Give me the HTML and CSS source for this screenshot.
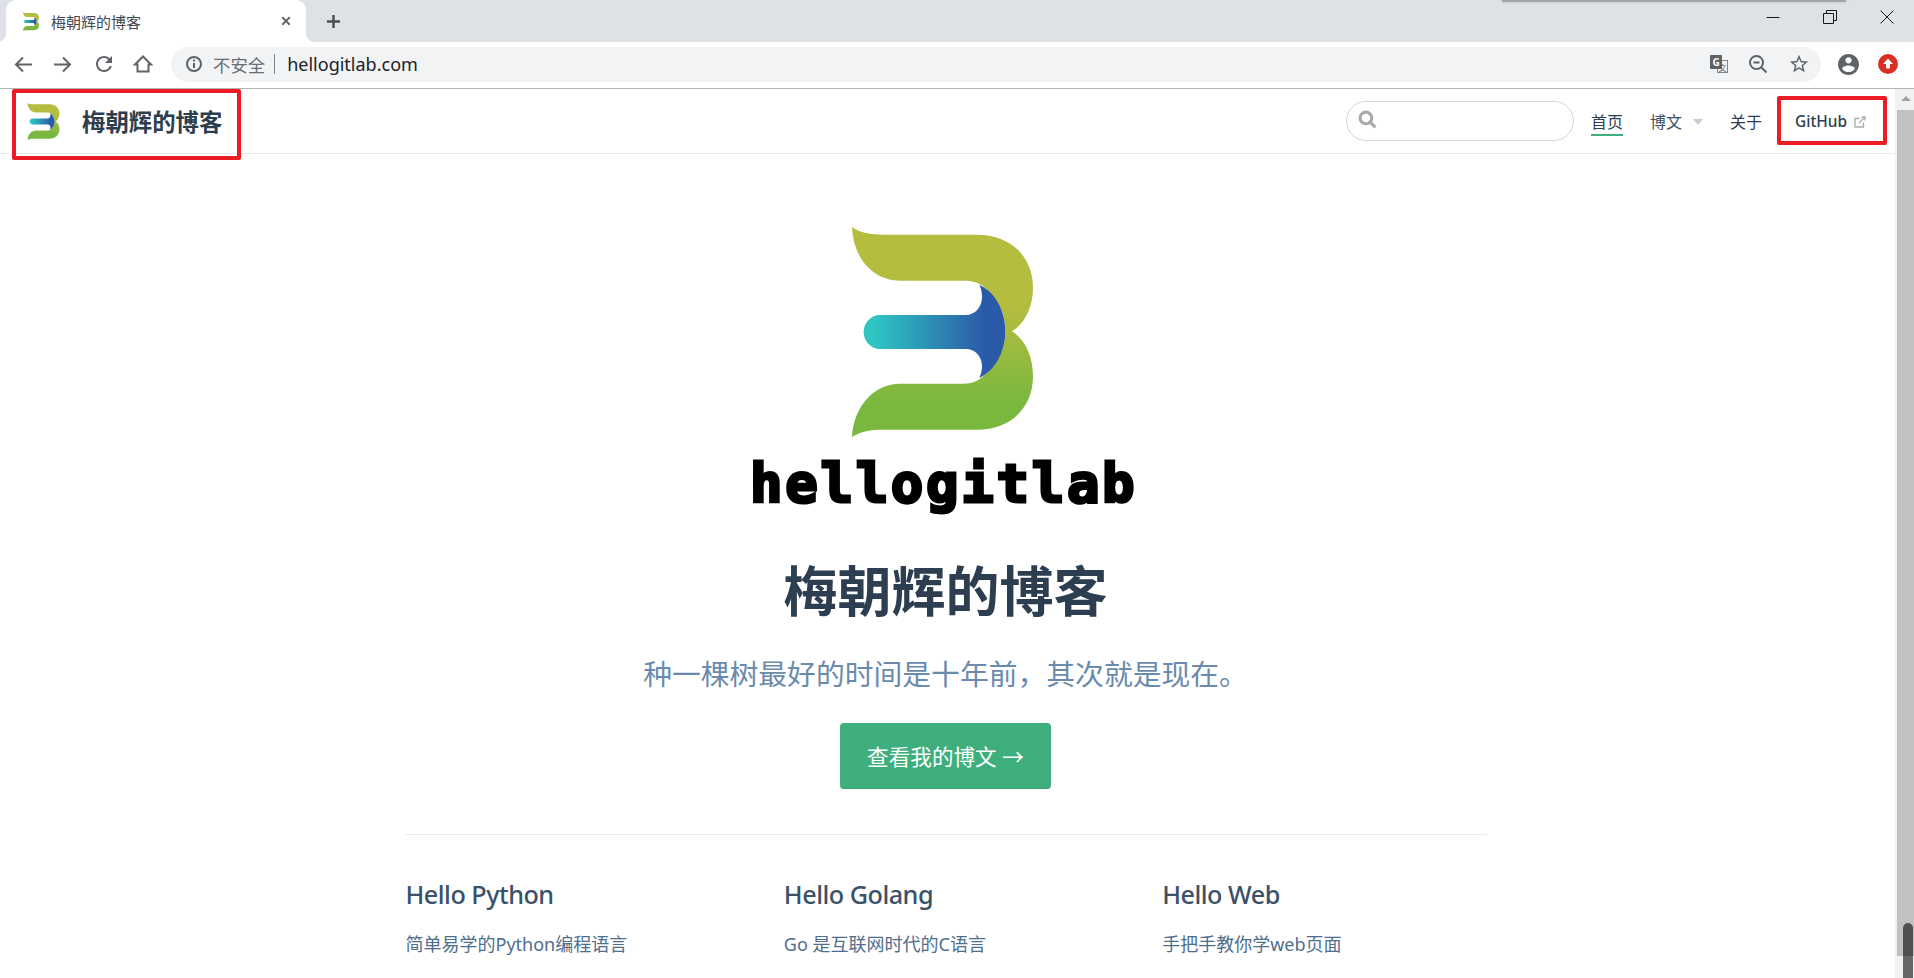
FILE: index.html
```html
<!DOCTYPE html>
<html lang="zh-CN">
<head>
<meta charset="utf-8">
<title>梅朝辉的博客</title>
<link rel="stylesheet" href="styles.css">
</head>
<body>
<svg class="sprite" aria-hidden="true">
  <defs>
    <linearGradient id="gGreen" gradientUnits="userSpaceOnUse" x1="0" y1="52" x2="0" y2="682">
      <stop offset="0.38" stop-color="#b5bd3f"/>
      <stop offset="0.85" stop-color="#78b83f"/>
    </linearGradient>
    <linearGradient id="gBlue" gradientUnits="userSpaceOnUse" x1="430" y1="0" x2="855" y2="0">
      <stop offset="0.08" stop-color="#2fc4c2"/>
      <stop offset="0.85" stop-color="#2b5ba8"/>
    </linearGradient>
    <symbol id="mark" viewBox="395 52 543 630">
      <path fill="url(#gGreen)" d="M395 52C420 70 450 75 490 75L770 75C870 75 938 140 938 235C938 290 915 340 875 365C915 390 938 440 938 500C938 595 870 660 770 660L490 660C450 660 420 665 395 682C400 590 460 522 540 522L730 522C755 522 770 515 785 503C835 465 855 415 855 365C855 315 835 265 785 227C770 218 755 213 730 213L540 213C460 213 400 150 395 52Z"/>
      <path fill="url(#gBlue)" d="M480 316L735 316C765 316 785 292 785 262C785 248 782 236 777 225C830 250 855 310 855 365C855 420 830 480 777 505C782 494 785 482 785 470C785 440 765 418 735 418L480 418C452 418 430 395 430 367C430 339 452 316 480 316Z"/>
    </symbol>
  </defs>
</svg>

<header class="chrome">
  <div class="tabstrip">
    <div class="tab">
      <svg class="favicon"><use href="#mark"/></svg>
      <span class="tab-title">梅朝辉的博客</span>
      <svg class="tab-close" viewBox="0 0 12 12"><path d="M1.5 1.5l9 9M10.5 1.5l-9 9"/></svg>
    </div>
    <svg class="new-tab" viewBox="0 0 16 16"><path d="M8 1v14M1 8h14"/></svg>
    <div class="spacer"></div>
    <div class="win-controls">
      <svg class="win-btn" viewBox="0 0 14 14"><path d="M0.5 7.5h13"/></svg>
      <svg class="win-btn" viewBox="0 0 14 14"><path d="M0.5 3.5h10v10h-10zM3.5 3.5v-3h10v10h-3"/></svg>
      <svg class="win-btn" viewBox="0 0 14 14"><path d="M0.5 0.5l13 13M13.5 0.5l-13 13"/></svg>
    </div>
    <div class="window-shadow"></div>
  </div>
  <div class="toolbar">
    <svg class="tool-icon" viewBox="0 0 20 20"><path d="M19 10.5H3M10 3.5L3 10.5l7 7"/></svg>
    <svg class="tool-icon" viewBox="0 0 20 20"><path d="M1 10.5h16M10 3.5l7 7-7 7"/></svg>
    <svg class="tool-icon fill" viewBox="0 0 24 24"><path d="M17.65 6.35A7.958 7.958 0 0 0 12 4c-4.42 0-7.99 3.58-7.99 8s3.57 8 7.99 8c3.73 0 6.84-2.55 7.73-6h-2.08A5.99 5.99 0 0 1 12 18c-3.31 0-6-2.69-6-6s2.69-6 6-6c1.66 0 3.14.69 4.22 1.78L13 11h7V4l-2.35 2.35z"/></svg>
    <svg class="tool-icon" viewBox="0 0 20 20"><path d="M10 2.5L2 10.5h2.5v7h11v-7H18Z"/></svg>
    <div class="omnibox">
      <svg class="omni-info" viewBox="0 0 18 18"><circle cx="9" cy="9" r="7"/><path d="M9 8v5M9 4.5v2"/></svg>
      <span class="omni-warn">不安全</span>
      <span class="omni-sep"></span>
      <span class="omni-url">hellogitlab.com</span>
      <div class="spacer"></div>
      <span class="translate"><span class="tr-back">文</span><span class="tr-front">G</span></span>
      <svg class="omni-zoom" viewBox="0 0 20 20"><circle cx="8.5" cy="8.5" r="6.5"/><path d="M13.5 13.5l5 5M5.5 8.5h6"/></svg>
      <svg class="omni-star" viewBox="0 0 24 24"><path d="M22 9.24l-7.19-.62L12 2 9.19 8.63 2 9.24l5.46 4.73L5.82 21 12 17.27 18.18 21l-1.63-7.03L22 9.24zM12 15.4l-3.76 2.27 1-4.28-3.32-2.88 4.38-.38L12 6.1l1.71 4.04 4.38.38-3.32 2.88 1 4.28L12 15.4z"/></svg>
    </div>
    <svg class="avatar" viewBox="2 2 20 20"><path d="M12 2C6.48 2 2 6.48 2 12s4.48 10 10 10 10-4.48 10-10S17.52 2 12 2zm0 3c1.66 0 3 1.34 3 3s-1.34 3-3 3-3-1.34-3-3 1.34-3 3-3zm0 14.2c-2.5 0-4.71-1.28-6-3.22.03-1.99 4-3.08 6-3.08 1.99 0 5.97 1.09 6 3.08-1.29 1.94-3.5 3.22-6 3.22z"/></svg>
    <svg class="ext-up" viewBox="0 0 20 20"><circle cx="10" cy="10" r="10"/><path class="ext-arrow" d="M10 4.5l5 5.5h-3v4.5H8V10H5Z"/></svg>
  </div>
</header>

<div class="viewport">
  <main class="page">
    <nav class="navbar">
      <a class="brand">
        <svg class="brand-logo"><use href="#mark"/></svg>
        <span class="brand-name">梅朝辉的博客</span>
      </a>
      <div class="spacer"></div>
      <div class="search">
        <svg class="search-icon" viewBox="0 0 18 18"><circle cx="7.5" cy="7.5" r="5.5"/><path d="M11.5 11.5l5 5"/></svg>
      </div>
      <a class="nav-link active">首页</a>
      <a class="nav-link dropdown">博文<span class="caret"></span></a>
      <a class="nav-link about">关于</a>
      <a class="nav-link github">GitHub
        <svg class="ext-icon" viewBox="0 0 12 12"><path d="M9.5 6.5v4.5H1V2.5h4.5"/><path class="ext-dash" d="M5 7l6-6M7.5 1H11v3.5"/></svg>
      </a>
    </nav>

    <section class="home">
      <header class="hero">
        <svg class="hero-mark"><use href="#mark"/></svg>
        <div class="hero-word">hellogitlab</div>
        <h1 class="hero-title">梅朝辉的博客</h1>
        <p class="hero-desc">种一棵树最好的时间是十年前，其次就是现在。</p>
        <a class="hero-action">查看我的博文 →</a>
      </header>
      <div class="features">
        <div class="feature">
          <h2>Hello Python</h2>
          <p>简单易学的Python编程语言</p>
        </div>
        <div class="feature">
          <h2>Hello Golang</h2>
          <p>Go 是互联网时代的C语言</p>
        </div>
        <div class="feature">
          <h2>Hello Web</h2>
          <p>手把手教你学web页面</p>
        </div>
      </div>
    </section>

    <div class="mark-box mark-brand"></div>
    <div class="mark-box mark-github"></div>
  </main>

  <aside class="scrollbar">
    <div class="sb-arrow-zone"><span class="sb-arrow"></span></div>
    <div class="sb-thumb"></div>
    <div class="sb-rest"></div>
    <div class="sb-cursor"></div>
  </aside>
</div>
</body>
</html>
```

FILE: styles.css
```css
* { box-sizing: border-box; }
html, body { margin: 0; height: 100%; overflow: hidden; background: #fff; }
body {
  display: flex;
  flex-direction: column;
  font-family: "Noto Sans", "Noto Sans CJK SC", sans-serif;
  color: #2c3e50;
}
.sprite { position: absolute; width: 0; height: 0; }
.spacer { flex: 1; }

/* browser chrome */
.chrome { flex: none; }
.tabstrip {
  position: relative;
  height: 42px;
  background: #dee1e6;
  display: flex;
  align-items: center;
  padding-left: 6px;
}
.tab {
  position: relative;
  width: 300px;
  height: 42px;
  background: #fff;
  border-radius: 10px 10px 0 0;
  display: flex;
  align-items: center;
  padding-left: 17px;
}
.tab::before, .tab::after {
  content: "";
  position: absolute;
  bottom: 0;
  width: 8px;
  height: 8px;
}
.tab::before { left: -8px; background: radial-gradient(circle at 0 0, #dee1e6 7.5px, #fff 8px); }
.tab::after { right: -8px; background: radial-gradient(circle at 100% 0, #dee1e6 7.5px, #fff 8px); }
.favicon { width: 16px; height: 19px; margin-right: 12px; }
.tab-title { font-size: 15px; color: #45494f; flex: 1; }
.tab-close { width: 10px; height: 10px; margin-right: 15px; fill: none; stroke: #5f6368; stroke-width: 2.2; }
.new-tab { width: 15px; height: 15px; margin-left: 20px; fill: none; stroke: #4a4d52; stroke-width: 2.6; }
.win-controls { display: flex; align-items: center; gap: 43px; padding-right: 20px; margin-top: -8px; }
.win-btn { width: 14px; height: 14px; fill: none; stroke: #1a1a1a; stroke-width: 1; }
.window-shadow {
  position: absolute;
  left: 1502px;
  top: 0;
  width: 344px;
  height: 2px;
  background: #a2a5a9;
  box-shadow: 0 0 3px #b4b7bb;
}
.toolbar {
  height: 47px;
  background: #fff;
  border-bottom: 1px solid #b4b4b4;
  display: flex;
  align-items: center;
  padding: 0 16px 2px 13px;
}
.tool-icon { width: 20px; height: 20px; margin-right: 20px; fill: none; stroke: #5f6368; stroke-width: 2; }
.tool-icon.fill { width: 24px; height: 24px; margin: 0 17px 0 -1px; fill: #5f6368; stroke: none; }
.omnibox {
  width: 1650px;
  height: 35px;
  margin-left: -2px;
  margin-right: 17px;
  border-radius: 18px;
  background: #f1f3f4;
  display: flex;
  align-items: center;
  padding-left: 14px;
}
.omni-info { width: 18px; height: 18px; fill: none; stroke: #5f6368; stroke-width: 2; margin-right: 10px; }
.omni-warn { font-size: 17.4px; color: #6a6e73; }
.omni-sep { width: 1px; height: 20px; background: #80868b; margin: 0 12px 0 9px; }
.omni-url { font-size: 18px; color: #202124; }
.translate { position: relative; width: 18px; height: 18px; margin-right: 20px; display: block; }
.tr-back {
  position: absolute; right: 0; bottom: 0; width: 11px; height: 13px;
  font-size: 8px; line-height: 13px; text-align: center;
  background: #f1f3f4; border: 1px solid #80868b; color: #5f6368;
}
.tr-front {
  position: absolute; left: 0; top: 0; width: 12px; height: 14px;
  font-size: 10px; font-weight: 700; line-height: 14px; text-align: center;
  background: #5f6368; color: #fff; border-radius: 1px;
}
.omni-zoom { width: 20px; height: 20px; fill: none; stroke: #5f6368; stroke-width: 2; margin-right: 20px; }
.omni-star { width: 22px; height: 22px; fill: #5f6368; margin-right: 11px; }
.avatar { width: 21px; height: 21px; fill: #5f6368; margin-right: 19px; }
.ext-up { width: 20px; height: 20px; fill: #d93025; }
.ext-arrow { fill: #fff; }

/* page */
.viewport { flex: 1; display: flex; min-height: 0; }
.page { position: relative; flex: 1; min-width: 0; overflow: hidden; }
.navbar {
  height: 65px;
  border-bottom: 1px solid #eaecef;
  display: flex;
  align-items: center;
  padding: 0 29px 0 27px;
}
.brand { display: flex; align-items: center; }
.brand-logo { width: 33px; height: 37px; margin-right: 22px; }
.brand-name { font-size: 23.4px; font-weight: 700; color: #2c3e50; }
.search {
  width: 228px;
  height: 40px;
  border: 1px solid #cfd4db;
  border-radius: 20px;
  display: flex;
  align-items: center;
  padding-left: 11px;
  margin-right: 17px;
}
.search-icon { width: 19px; height: 19px; fill: none; stroke: #aaa; stroke-width: 3; margin-top: -3px; }
.nav-link { font-size: 16px; line-height: 24px; color: #2c3e50; margin-right: 28px; margin-top: 2px; display: flex; align-items: center; }
.nav-link.active { border-bottom: 2px solid #3eaf7c; margin-top: 4px; margin-right: 27px; }
.dropdown { color: #3a5169; margin-right: 27px; }
.caret {
  width: 0; height: 0; margin-left: 11px;
  border-left: 5px solid transparent;
  border-right: 5px solid transparent;
  border-top: 6px solid #ccc;
}
.about { margin-right: 33px; }
.github { margin-right: 0; font-size: 15.4px; font-weight: 500; gap: 7px; }
.ext-icon { width: 12px; height: 12px; fill: none; stroke: #aaa; stroke-width: 1.3; }
.mark-box { position: absolute; border: 4px solid #ed1c24; border-radius: 2px; }
.mark-brand { left: 12px; top: 0; width: 229px; height: 71px; }
.mark-github { left: 1777px; top: 7px; width: 110px; height: 49px; }

.home { width: 1082px; margin: 0 auto; transform: translateX(-2px); }
.hero { display: flex; flex-direction: column; align-items: center; padding-top: 73px; }
.hero-mark { width: 181px; height: 210px; margin-right: 7px; }
.hero-word {
  width: 381px;
  margin: 16px 10px 0 0;
  height: 62px;
  font-family: "DejaVu Sans Mono", monospace;
  font-weight: 700;
  font-size: 54px;
  line-height: 62px;
  letter-spacing: 2.7px;
  white-space: nowrap;
  color: #000;
  -webkit-text-stroke: 3px #000;
}
.hero-title { margin: 40px 0 0; font-size: 54px; line-height: 72px; font-weight: 700; color: #2c3e50; }
.hero-desc { margin: 27px 0 0; font-size: 28.8px; line-height: 40px; font-weight: 400; color: #6a8bad; }
.hero-action {
  margin-top: 29px;
  width: 211px;
  height: 66px;
  background: #3eaf7c;
  border-bottom: 1px solid #389d70;
  border-radius: 4px;
  color: #fff;
  font-size: 21.6px;
  display: flex;
  align-items: center;
  justify-content: center;
}
.features {
  margin-top: 45px;
  border-top: 1px solid #eaecef;
  padding: 32px 0 0 1px;
  display: flex;
  justify-content: space-between;
}
.feature { width: 30%; }
.feature h2 { margin: 0; font-size: 25.2px; line-height: 54px; font-weight: 500; color: #3a5169; letter-spacing: -0.5px; }
.feature p { margin: 7px 0 0; font-size: 18px; line-height: 32px; color: #4e6e8e; }

/* scrollbar */
.scrollbar {
  position: relative;
  flex: none;
  width: 19px;
  display: flex;
  flex-direction: column;
  background: #f1f1f1;
  padding-left: 2px;
}
.sb-arrow-zone { height: 21px; display: flex; justify-content: center; padding-top: 7px; }
.sb-arrow {
  width: 0; height: 0;
  border-left: 5px solid transparent;
  border-right: 5px solid transparent;
  border-bottom: 5px solid #a3a3a3;
}
.sb-thumb { height: 846px; background: #c1c1c1; }
.sb-rest { flex: 1; }
.sb-cursor {
  position: absolute;
  left: 8px;
  right: 1px;
  bottom: 0;
  height: 55px;
  background: linear-gradient(#505050 0, #505050 33px, #666 33px);
  border-radius: 5px 5px 0 0;
}
```
